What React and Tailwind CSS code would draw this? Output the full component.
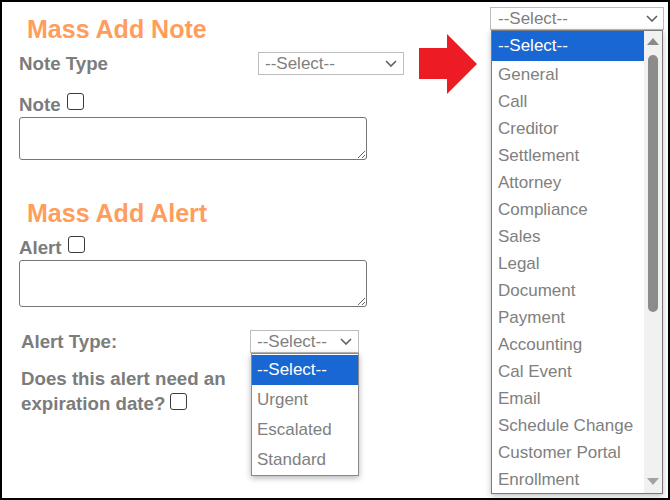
import React from 'react';

const noteTypes = [
  'General', 'Call', 'Creditor', 'Settlement', 'Attorney', 'Compliance', 'Sales', 'Legal',
  'Document', 'Payment', 'Accounting', 'Cal Event', 'Email', 'Schedule Change', 'Customer Portal', 'Enrollment',
];

const alertTypes = ['Urgent', 'Escalated', 'Standard'];

const Chevron = ({ className }) => (
  <svg viewBox="0 0 12 7" className={className} fill="none" stroke="#5f5f5f" strokeWidth="1.6">
    <path d="M1 1 L6 6 L11 1" />
  </svg>
);

const Checkbox = ({ className = '' }) => (
  <span className={`inline-block w-[17px] h-[17px] border-[1.5px] border-[#3b3b3b] rounded-[3px] bg-white ${className}`} />
);

const FakeSelect = ({ className, chevronClass = 'ml-auto mr-[6px]' }) => (
  <div className={`flex items-center border border-[#bdbdbd] bg-white text-[17px] text-[#808080] ${className}`}>
    <span>--Select--</span>
    <Chevron className={`w-[12px] h-[7px] ${chevronClass}`} />
  </div>
);

const App = () => {
  return (
    <div
      className="relative w-[670px] h-[500px] border-2 border-black bg-white overflow-hidden"
      style={{ fontFamily: '"Liberation Sans", Arial, sans-serif' }}
    >
      {/* Form column */}
      <div className="pl-[17px] pt-[13px]">
        <h1 className="ml-2 text-[25px] leading-[28px] font-bold text-[#ff9d5c]">Mass Add Note</h1>

        <div className="mt-[9px] flex items-center">
          <span className="w-[239px] text-[18.7px] leading-[22px] font-bold text-[#7c7c7c]">Note Type</span>
          <FakeSelect className="w-[146px] h-[23px] pl-[6px]" />
        </div>

        <div className="mt-[18px] flex items-start gap-[6px]">
          <span className="mt-[1px] text-[18.7px] leading-[22px] font-bold text-[#7c7c7c]">Note</span>
          <Checkbox />
        </div>
        <textarea className="mt-[1px] block w-[348px] h-[43px] border border-[#767676] rounded-[3px]" />

        <h1 className="mt-[39px] ml-2 text-[25px] leading-[28px] font-bold text-[#ff9d5c]">Mass Add Alert</h1>

        <div className="mt-[9px] flex items-start gap-[6px]">
          <span className="mt-[1px] text-[18.7px] leading-[22px] font-bold text-[#7c7c7c]">Alert</span>
          <Checkbox />
        </div>
        <textarea className="mt-[1px] block w-[348px] h-[47px] border border-[#767676] rounded-[3px]" />

        <div className="mt-[23px] ml-[2px] flex items-center">
          <span className="w-[229px] text-[18.7px] leading-[22px] font-bold text-[#7c7c7c]">Alert Type:</span>
          <div className="relative">
            <FakeSelect className="w-[109px] h-[23px] pl-[6px]" />
            <div className="absolute left-[1px] top-full w-[108px] h-[123px] border border-[#8a8a8a] bg-white pt-[1px] shadow-[0_2px_6px_rgba(0,0,0,0.3)] z-10">
              <div className="h-[30px] leading-[30px] pl-[5px] bg-[#1967d2] text-white text-[17px]">--Select--</div>
              {alertTypes.map((t) => (
                <div key={t} className="h-[30px] leading-[30px] pl-[5px] text-[17px] text-[#808080]">{t}</div>
              ))}
            </div>
          </div>
        </div>

        <p className="mt-[13px] ml-[2px] text-[18.7px] leading-[25px] font-bold text-[#7c7c7c]">
          Does this alert need an
          <br />
          expiration date?<Checkbox className="ml-[5px] align-baseline" />
        </p>
      </div>

      {/* Red pointer arrow */}
      <svg className="absolute left-[415px] top-[30px]" width="62" height="64" viewBox="0 0 62 64">
        <path d="M2 16 H30 V2 L60 32 L30 62 V47 H2 Z" fill="#ed1c24" />
      </svg>

      {/* Open note type dropdown */}
      <div className="absolute left-[488px] top-[5px] w-[174px]">
        <FakeSelect className="w-[174px] h-[23px] pl-[7px]" chevronClass="ml-auto mr-[5px]" />
        <div className="ml-[1px] w-[172px] h-[464px] flex border border-[#7a7a7a] bg-white shadow-[0_2px_6px_rgba(0,0,0,0.25)]">
          <div className="w-[152px]">
            <div className="h-[30px] leading-[30px] pl-[6px] bg-[#1967d2] text-white text-[17px]">--Select--</div>
            {noteTypes.map((t) => (
              <div key={t} className="h-[27px] leading-[27px] pl-[6px] text-[17px] text-[#808080] whitespace-nowrap">{t}</div>
            ))}
          </div>
          <div className="w-[18px] bg-[#f1f1f1] flex flex-col items-center pt-[7px] pb-[8px]">
            <svg width="12" height="7" viewBox="0 0 12 7"><path d="M0 7 L6 0 L12 7 Z" fill="#8a8a8a" /></svg>
            <div className="mt-[10px] w-[10px] h-[257px] rounded-full bg-[#8c8c8c]" />
            <div className="flex-1" />
            <svg width="12" height="7" viewBox="0 0 12 7"><path d="M0 0 L12 0 L6 7 Z" fill="#a3a3a3" /></svg>
          </div>
        </div>
      </div>
    </div>
  );
};

export default App;
